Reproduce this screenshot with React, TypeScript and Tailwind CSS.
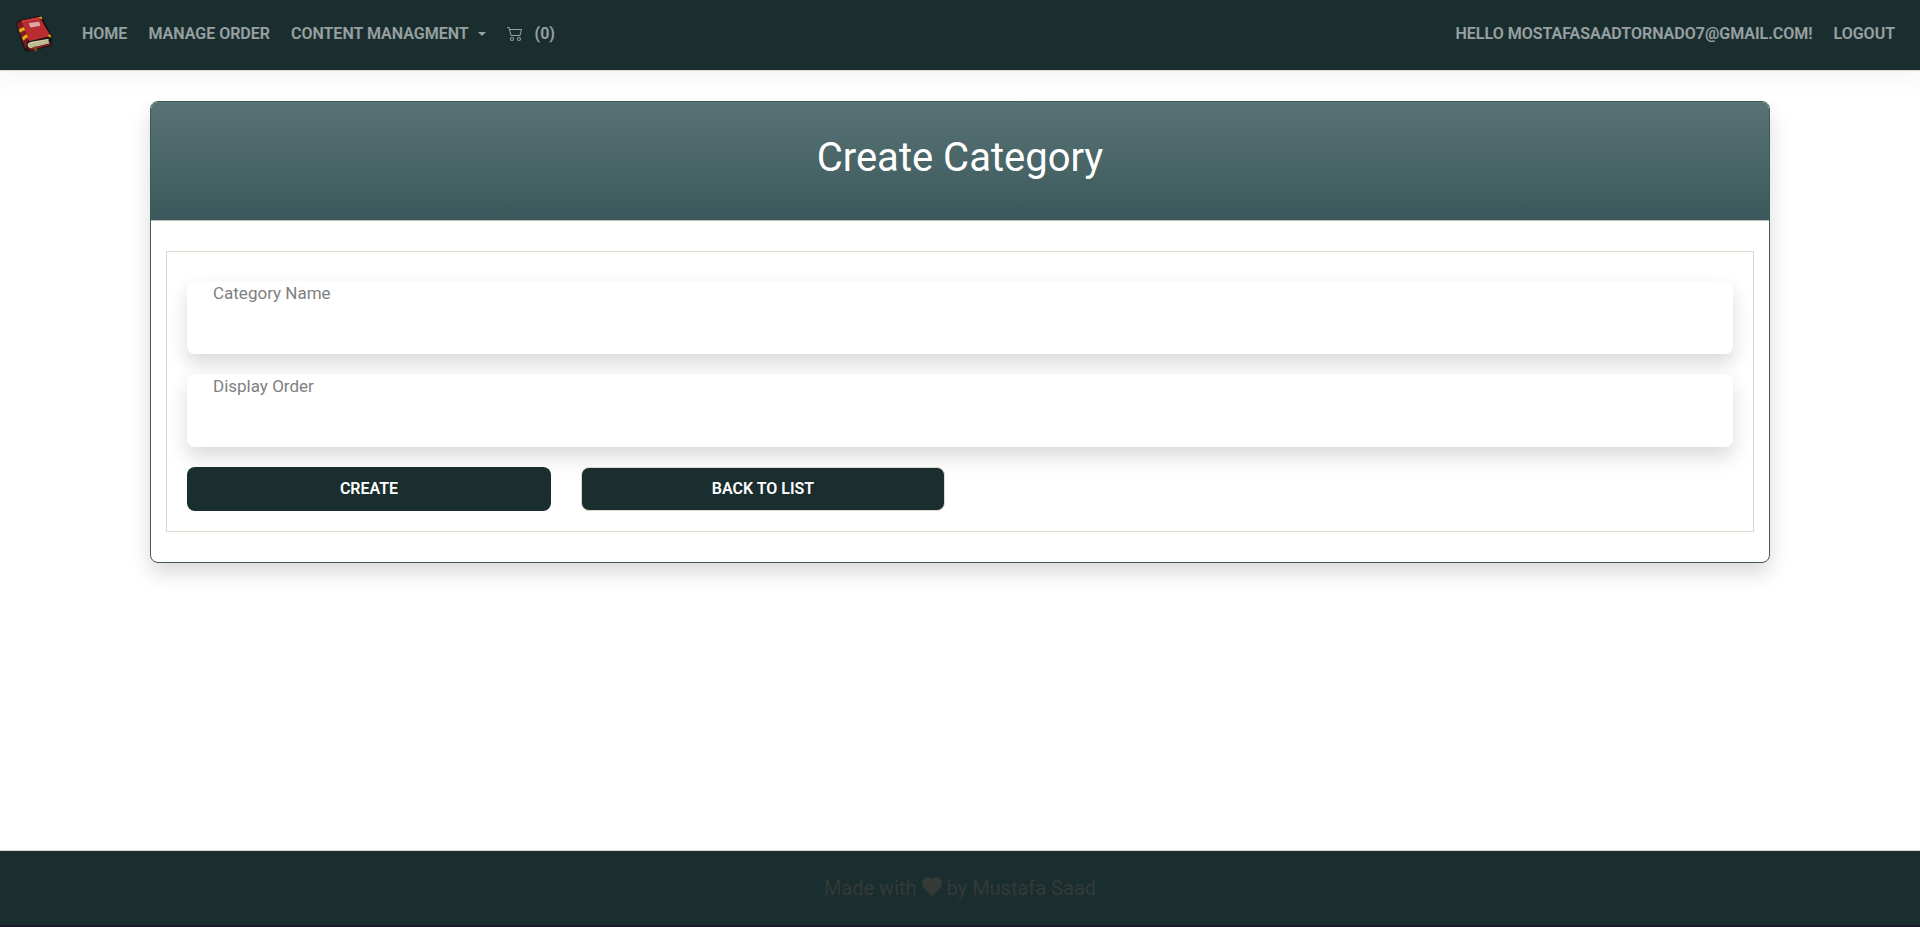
import React from "react";
import { BsCart2 } from "react-icons/bs";

function BookLogo() {
  return (
    <svg viewBox="45 45 114 117" className="h-[39px] w-[38px]" role="img" aria-label="Bookstore">
      <path d="M48 74 Q50 64 60 60 L118 48 L127 51 L156 110 L155 138 L114 148 L109 159 L102 151 L80 155 Q72 153 70 142 Z" fill="#1a1212" />
      <path d="M51 75 Q53 66 64 63 L88 118 Q78 124 80 147 L74 141 Z" fill="#7d1c20" />
      <path d="M56 89 Q62 84 72 81 L77 91 Q67 92 60 98 Z M66 113 Q72 105 81 102 L86 112 Q76 114 70 122 Z" fill="#e3ae14" />
      <path d="M64 62 L118 51 L152 108 L88 124 Z" fill="#b92c30" />
      <path d="M64 62 L118 51 L121 56 L67 68 Z" fill="#cb3a3c" />
      <path d="M85 68 L118 64 L123 78 L90 84 Z" fill="#e5a3a5" stroke="#7d1c20" strokeWidth="1.5" />
      <path d="M116 51 L125 50 L127 59 Z M143 108 L150 103 L154 113 Z" fill="#e8bd18" />
      <path d="M83 132 Q85 127 94 125 L146 116 Q143 123 149 130 L92 145 Q82 143 83 132 Z" fill="#cfc9a0" />
      <path d="M88 135 L143 122 M90 140 L145 127" stroke="#989270" strokeWidth="1.5" fill="none" />
      <path d="M80 147 L151 131 L154 134 L94 150 Z" fill="#8d2024" />
      <path d="M102 140 L109 139 L112 150 L108 157 L103 151 Z" fill="#7b4a1e" />
    </svg>
  );
}

function Heart() {
  return (
    <svg viewBox="0 0 20 19" className="mb-1 h-[19px] w-5" fill="currentColor" role="img" aria-label="love">
      <path d="M10 2.2C11.2.8 12.7 0 14.5 0 17.6 0 20 2.4 20 5.6c0 3.6-2 6.1-5 9.2L10.8 18.7a1.1 1.1 0 0 1-1.6 0L5 14.8C2 11.7 0 9.2 0 5.6 0 2.4 2.4 0 5.5 0 7.3 0 8.8.8 10 2.2z" />
    </svg>
  );
}

function NavLink({ children }: { children: React.ReactNode }) {
  return (
    <a href="#" className="flex items-center whitespace-nowrap text-white/55 hover:text-white">
      {children}
    </a>
  );
}

function Field({ id, label, type }: { id: string; label: string; type: string }) {
  return (
    <div className="flex flex-col rounded-lg bg-white shadow-[0_10px_20px_rgba(0,0,0,0.15)]">
      <label htmlFor={id} className="mx-[26px] self-start text-[17px]/6 text-[#808080]">
        {label}
      </label>
      <input id={id} type={type} className="h-[49px] w-full rounded-b-lg bg-transparent px-[26px] text-base outline-none" />
    </div>
  );
}

export default function App() {
  return (
    <div className="flex min-h-screen flex-col bg-white font-['Roboto',sans-serif] text-base">
      <nav className="flex items-center justify-between border-b border-[#dfd7ca] bg-[#1a2e2f] pt-[13px] pb-[14px] pr-[25px] pl-[15px] shadow-[0_10px_20px_rgba(0,0,0,0.04)]">
        <div className="flex items-center gap-[29px]">
          <a href="#" className="my-[2px] block">
            <BookLogo />
          </a>
          <div className="flex items-center gap-[21px] pb-0.5 font-semibold uppercase">
            <NavLink>Home</NavLink>
            <NavLink>Manage Order</NavLink>
            <button type="button" className="flex items-center gap-[9px] font-semibold text-white/55 uppercase hover:text-white">
              Content Managment
              <svg viewBox="0 0 8 4" className="h-1 w-2" aria-hidden="true">
                <path d="M0 0h8L4 4z" fill="currentColor" />
              </svg>
            </button>
            <NavLink>
              <BsCart2 className="mr-3 mb-0.5" aria-label="Cart" />
              (0)
            </NavLink>
          </div>
        </div>
        <div className="flex items-center gap-[21px] pb-0.5 font-semibold uppercase">
          <NavLink>Hello mostafasaadtornado7@gmail.com!</NavLink>
          <NavLink>Logout</NavLink>
        </div>
      </nav>

      <main className="grow px-[150px] pt-[30px] pb-8">
        <section className="rounded-lg border border-[#3e5c4b] bg-white shadow-[0_10px_20px_rgba(0,0,0,0.15)]">
          <header className="rounded-t-[7px] border-b border-[#bcbcaf] bg-linear-to-b from-[#5a7275] via-[#4a6668] via-50% to-[#3a585b] pt-8 pb-[38px] text-center">
            <h1 className="text-[40px]/12 font-normal text-white">Create Category</h1>
          </header>
          <div className="px-[15px] py-[30px]">
            <form className="flex flex-col gap-5 border border-[#dfd7ca] px-5 pt-[29px] pb-5" onSubmit={(e) => e.preventDefault()}>
              <Field id="category-name" label="Category Name" type="text" />
              <Field id="display-order" label="Display Order" type="text" />
              <div className="grid grid-cols-4 gap-[30px]">
                <button type="submit" className="h-11 rounded-lg bg-[#1a2e2f] font-semibold text-white uppercase">
                  Create
                </button>
                <a href="#" className="flex h-11 items-center justify-center rounded-lg border border-[#dfd7ca] bg-[#1a2e2f] font-semibold text-white uppercase">
                  Back to List
                </a>
              </div>
            </form>
          </div>
        </section>
      </main>

      <footer className="border-t border-b-2 border-t-[#dfd7ca] border-b-[#1a1a2e] bg-[#1a2e2f] py-[22px]">
        <p className="flex items-center justify-center gap-[5px] text-xl/[30px] text-[#343a36]">
          Made with
          <Heart />
          by Mustafa Saad
        </p>
      </footer>
    </div>
  );
}
